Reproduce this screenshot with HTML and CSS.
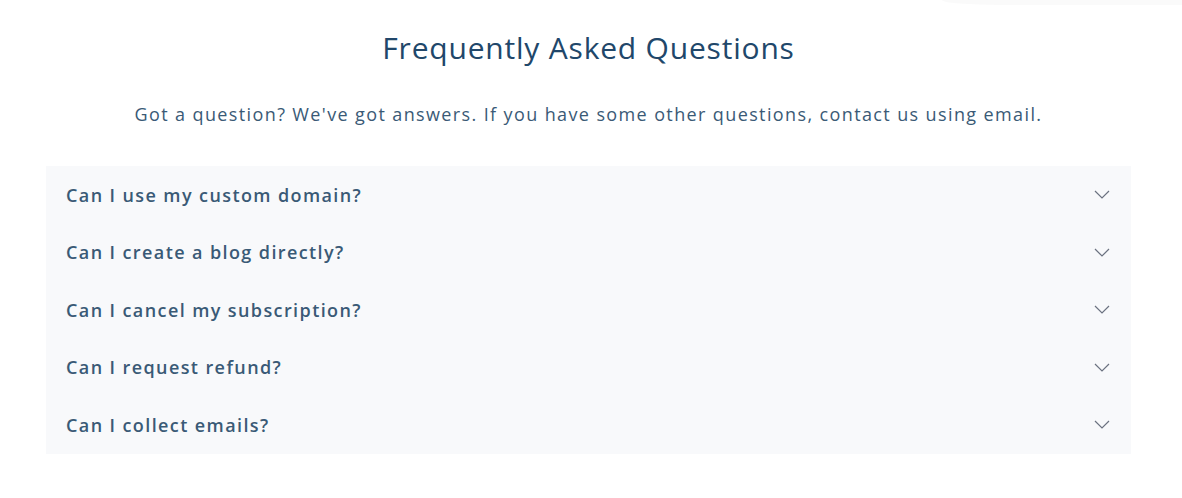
FILE: index.html
```html
<!DOCTYPE html>
<html lang="en">
<head>
<meta charset="utf-8">
<title>FAQ</title>
<link rel="stylesheet" href="styles.css">
</head>
<body>
<div class="corner"></div>
<section class="faq">
  <h1 class="faq-title">Frequently Asked Questions</h1>
  <p class="faq-sub">Got a question? We've got answers. If you have some other questions, contact us using email.</p>
  <div class="accordion">
    <div class="item"><span class="q">Can I use my custom domain?</span><svg class="chev" width="16" height="9" viewBox="0 0 16 9"><path d="M1 1l7 7 7-7" fill="none" stroke="#6b7280" stroke-width="1.2"/></svg></div>
    <div class="item"><span class="q">Can I create a blog directly?</span><svg class="chev" width="16" height="9" viewBox="0 0 16 9"><path d="M1 1l7 7 7-7" fill="none" stroke="#6b7280" stroke-width="1.2"/></svg></div>
    <div class="item"><span class="q">Can I cancel my subscription?</span><svg class="chev" width="16" height="9" viewBox="0 0 16 9"><path d="M1 1l7 7 7-7" fill="none" stroke="#6b7280" stroke-width="1.2"/></svg></div>
    <div class="item"><span class="q">Can I request refund?</span><svg class="chev" width="16" height="9" viewBox="0 0 16 9"><path d="M1 1l7 7 7-7" fill="none" stroke="#6b7280" stroke-width="1.2"/></svg></div>
    <div class="item"><span class="q">Can I collect emails?</span><svg class="chev" width="16" height="9" viewBox="0 0 16 9"><path d="M1 1l7 7 7-7" fill="none" stroke="#6b7280" stroke-width="1.2"/></svg></div>
  </div>
</section>
</body>
</html>
```
FILE: styles.css
```css
html, body {
  margin: 0;
  padding: 0;
  background: #ffffff;
}
body {
  font-family: "Open Sans", "Noto Sans", sans-serif;
  position: relative;
}
.corner {
  position: absolute;
  top: 0;
  right: 0;
  width: 240px;
  height: 5px;
  background: #fafafa;
  border-bottom-left-radius: 60px 5px;
}
.faq {
  padding: 30px 51px 0 46px;
}
.faq-title {
  margin: 0;
  text-align: center;
  font-size: 30px;
  font-weight: 500;
  line-height: 36px;
  letter-spacing: 0.8px;
  color: #21476a;
}
.faq-sub {
  margin: 36px 0 0;
  text-align: center;
  font-size: 18px;
  line-height: 24px;
  letter-spacing: 1.38px;
  color: #3a5a76;
}
.accordion {
  margin-top: 40px;
  background: #f8f9fb;
}
.item {
  height: 57.5px;
  padding: 0 21px 0 20px;
  display: flex;
  align-items: center;
  justify-content: space-between;
}
.q {
  font-size: 18px;
  font-weight: 600;
  letter-spacing: 1.4px;
  color: #3a5a76;
}
.chev {
  display: block;
}
```
